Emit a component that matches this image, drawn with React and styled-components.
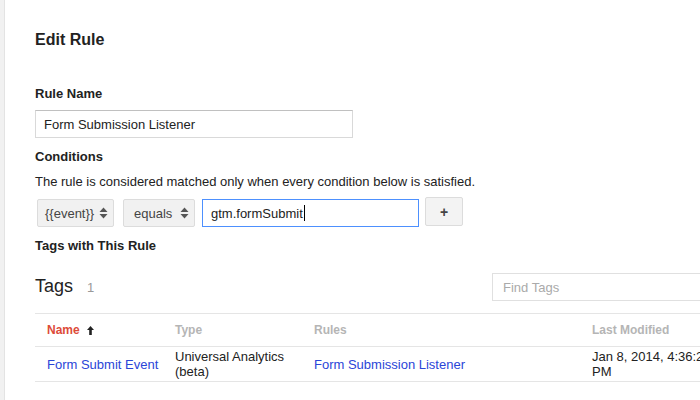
import React from 'react'
import styled, { createGlobalStyle } from 'styled-components'

const Global = createGlobalStyle`
  html, body {
    margin: 0;
    padding: 0;
    background: #ffffff;
    overflow: hidden;
  }
  body {
    font-family: "Liberation Sans", Arial, sans-serif;
    font-size: 13px;
    color: #222222;
  }
  * { box-sizing: border-box; }
`

export const Page = styled.div`
  display: flex;
  width: 700px;
  height: 400px;
  overflow: hidden;
`

export const Sidebar = styled.div`
  flex: 0 0 5px;
  background: #f1f1f1;
  border-right: 1px solid #e3e3e3;
`

export const Main = styled.div`
  flex: 0 0 730px;
  padding: 30px 0 0 30px;
`

export const Title = styled.h1`
  margin: 0;
  font-size: 16px;
  line-height: 20px;
  font-weight: bold;
  color: #222;
`

export const Label = styled.h2`
  margin: ${p => p.$top || 0}px 0 0;
  font-size: 13px;
  line-height: 16px;
  font-weight: bold;
  color: #222;
`

export const Hint = styled.p`
  margin: 9px 0 0;
  font-size: 13px;
  line-height: 16px;
  color: #222;
`

export const TextBox = styled.div`
  display: flex;
  align-items: center;
  width: ${p => p.$w}px;
  height: 28px;
  margin-top: ${p => p.$top || 0}px;
  padding: 0 8px;
  border: 1px solid ${p => (p.$focus ? '#4d90fe' : '#d9d9d9')};
  border-top-color: ${p => (p.$focus ? '#4d90fe' : '#c0c0c0')};
  background: #fff;
  font-size: 13px;
  color: #222;
`

export const Caret = styled.span`
  display: inline-block;
  width: 1px;
  height: 16px;
  background: #000;
  margin-left: 1px;
`

export const CondRow = styled.div`
  display: flex;
  align-items: flex-start;
  margin-top: 7px;
`

export const Select = styled.div`
  display: flex;
  align-items: center;
  justify-content: space-between;
  width: ${p => p.$w}px;
  height: 28px;
  margin: 2px ${p => p.$gap}px 0 ${p => p.$left || 0}px;
  padding: 0 5px 0 ${p => p.$pad}px;
  background: #f1f1f1;
  border: 1px solid #dcdcdc;
  border-radius: 2px;
  color: #444;
  font-size: 13px;
`

export const PlusButton = styled.div`
  display: flex;
  align-items: center;
  justify-content: center;
  width: 38px;
  height: 29px;
  margin-left: 6px;
  background: #f3f3f3;
  border: 1px solid #dcdcdc;
  border-radius: 2px;
  color: #444;
  font-size: 14px;
  font-weight: bold;
`

export const TagsHeader = styled.div`
  display: flex;
  align-items: center;
  justify-content: space-between;
  margin-top: 19px;
  height: 28px;
`

export const TagsTitle = styled.div`
  display: flex;
  align-items: baseline;
  font-size: 18px;
  line-height: 22px;
  color: #222;
`

export const Count = styled.span`
  margin-left: 14px;
  font-size: 13px;
  color: #999;
`

export const Search = styled.div`
  display: flex;
  align-items: center;
  width: 243px;
  height: 28px;
  padding: 0 10px;
  border: 1px solid #e0e0e0;
  color: #aaa;
  font-size: 13px;
`

export const Table = styled.div`
  margin-top: 12px;
  width: 700px;
`

export const Row = styled.div`
  display: grid;
  grid-template-columns: 128px 139px 278px 140px;
  align-items: center;
  border-top: 1px solid #e5e5e5;
  border-bottom: ${p => (p.$last ? '1px solid #e5e5e5' : '0')};
  height: ${p => p.$h}px;
`

export const HeadCell = styled.div`
  display: flex;
  align-items: center;
  padding-left: 12px;
  font-size: 12px;
  font-weight: bold;
  color: ${p => (p.$active ? '#dd4b39' : '#b5b5b5')};
`

export const Cell = styled.div`
  padding-left: 12px;
  font-size: 13px;
  line-height: 15px;
  color: ${p => (p.$link ? '#2a45d8' : '#222')};
`

const Arrows = () => (
  <svg width="9" height="12" viewBox="0 0 9 12">
    <path d="M4.5 0.5 L8.5 5 L0.5 5 Z" fill="#555" />
    <path d="M0.5 7 L8.5 7 L4.5 11.5 Z" fill="#555" />
  </svg>
)

const SortUp = () => (
  <svg width="7" height="9" viewBox="0 0 7 9" style={{ marginLeft: 7 }}>
    <path d="M3.5 0 L7 4 L4.8 4 L4.8 9 L2.2 9 L2.2 4 L0 4 Z" fill="#222" />
  </svg>
)

export default function App() {
  return (
    <Page>
      <Global />
      <Sidebar />
      <Main>
        <Title>Edit Rule</Title>
        <Label $top={36}>Rule Name</Label>
        <TextBox $w={318} $top={8}>Form Submission Listener</TextBox>
        <Label $top={11}>Conditions</Label>
        <Hint>The rule is considered matched only when every condition below is satisfied.</Hint>
        <CondRow>
          <Select $w={77} $pad={7} $gap={9} $left={2}>
            {'{{event}}'}
            <Arrows />
          </Select>
          <Select $w={72} $pad={10} $gap={7}>
            equals
            <Arrows />
          </Select>
          <TextBox $w={217} $focus style={{ marginTop: 2 }}>
            gtm.formSubmit<Caret />
          </TextBox>
          <PlusButton>+</PlusButton>
        </CondRow>
        <Label $top={11}>Tags with This Rule</Label>
        <TagsHeader>
          <TagsTitle>
            Tags<Count>1</Count>
          </TagsTitle>
          <Search>Find Tags</Search>
        </TagsHeader>
        <Table>
          <Row $h={33}>
            <HeadCell $active>
              Name
              <SortUp />
            </HeadCell>
            <HeadCell>Type</HeadCell>
            <HeadCell>Rules</HeadCell>
            <HeadCell>Last Modified</HeadCell>
          </Row>
          <Row $h={36} $last>
            <Cell $link>Form Submit Event</Cell>
            <Cell>Universal Analytics (beta)</Cell>
            <Cell $link>Form Submission Listener</Cell>
            <Cell>Jan 8, 2014, 4:36:25 PM</Cell>
          </Row>
        </Table>
      </Main>
    </Page>
  )
}
